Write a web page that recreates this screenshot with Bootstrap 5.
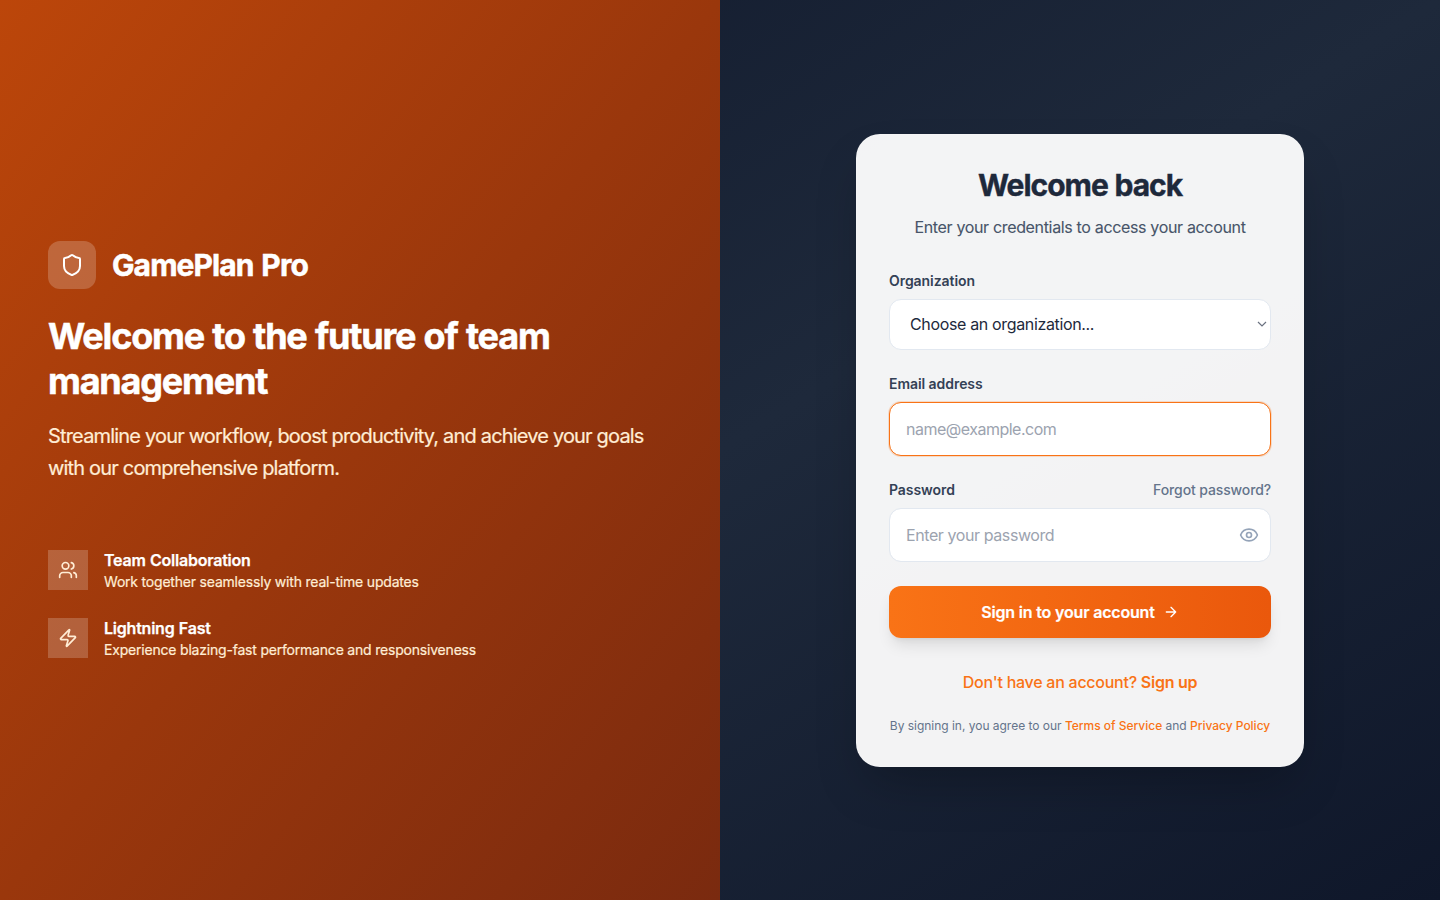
<!DOCTYPE html>
<html lang="en">
<head>
<meta charset="utf-8">
<meta name="viewport" content="width=device-width, initial-scale=1">
<title>GamePlan Pro</title>
<link href="https://cdn.jsdelivr.net/npm/bootstrap@5.3.0/dist/css/bootstrap.min.css" rel="stylesheet">
<style>
body{font-family:Inter,"Liberation Sans",sans-serif;background:linear-gradient(to bottom right,#0f172a,#1e293b,#0f172a);min-height:100vh;line-height:1.5;overflow:hidden}
svg{fill:none;stroke:currentColor;stroke-width:2;stroke-linecap:round;stroke-linejoin:round;display:block}
.hero{background:linear-gradient(to bottom right,#bc460a,#9a370c,#7a2a0f)}
.logo-box{width:48px;height:48px;border-radius:12px;background:rgba(255,255,255,.2)}
.brand{font-size:30px;line-height:36px;font-weight:700;letter-spacing:-.9px;word-spacing:1.5px;-webkit-text-stroke:.5px #fff}
.headline{font-size:36px;line-height:45px;font-weight:700;letter-spacing:-1.2px;word-spacing:1px;-webkit-text-stroke:.5px #fff;padding-top:1px}
.tagline{font-size:20px;line-height:32px;color:#ffedd5;letter-spacing:-.82px;-webkit-text-stroke:.2px #ffedd5}
.features{margin-top:64px}
.feat-box{width:40px;height:40px;background:rgba(255,255,255,.2);color:#ffedd5}
.feat-title{font-size:16px;line-height:24px;font-weight:600;letter-spacing:-.22px;word-spacing:.5px;-webkit-text-stroke:.25px #fff}
.feat-sub{font-size:14px;line-height:20px;color:#ffedd5;letter-spacing:-.2px;-webkit-text-stroke:.2px #ffedd5}
.login-card{width:448px;padding:32px;border:1px solid rgba(255,255,255,.2);border-radius:24px;background:rgba(255,255,255,.95);box-shadow:0 25px 50px -12px rgba(0,0,0,.25)}
.title{font-size:30px;line-height:36px;font-weight:700;letter-spacing:-1px;word-spacing:.5px;color:#1e293b;-webkit-text-stroke:.4px #1e293b;margin-bottom:12px}
.sub{font-size:16px;line-height:24px;color:#475569;letter-spacing:-.34px;-webkit-text-stroke:.1px #475569}
.org{margin-top:32px}
.lbl{font-size:14px;line-height:20px;font-weight:600;color:#334155;letter-spacing:-.06px}
.forgot{color:#64748b;letter-spacing:-.12px}
.fld,.fld:focus{font-size:16px;border:1px solid #e2e8f0;border-radius:12px;padding:0 16px;height:54px;color:#1e293b;background-color:#fff;box-shadow:none;letter-spacing:-.41px}
#email{letter-spacing:-.5px}
.fld::placeholder{color:#9ca3af}
.pick,.pick:focus{height:51px;padding-left:20px;letter-spacing:-.35px;background-image:url("data:image/svg+xml,%3csvg xmlns='http://www.w3.org/2000/svg' viewBox='0 0 12 12'%3e%3cpath fill='none' stroke='%236b7280' stroke-width='1.2' d='m2 4 4 4 4-4'/%3e%3c/svg%3e");background-position:right 2px center;background-size:12px}
.fld.active{border-color:#f97316;box-shadow:0 0 0 1px rgba(249,115,22,.2)}
.eye{right:12px;top:17px;color:#94a3b8}
.go{height:52px;border-radius:12px;background:linear-gradient(to right,#f97316,#ea580c);font-size:16px;font-weight:600;letter-spacing:-.18px;-webkit-text-stroke:.2px #fff;box-shadow:0 10px 15px -3px rgba(0,0,0,.1),0 4px 6px -4px rgba(0,0,0,.1)}
.signup{font-size:16px;line-height:24px;font-weight:500;color:#f97316;letter-spacing:-.26px;margin-top:32px}
.terms{font-size:12px;line-height:16px;color:#64748b;white-space:nowrap;letter-spacing:-.02px;margin-top:24px}
.terms a{color:#f97316}
</style>
</head>
<body>
<div class="d-flex vh-100">
<section class="hero w-50 d-flex flex-column justify-content-center px-5 text-white">
  <div class="d-flex align-items-center gap-3 mb-4">
    <div class="logo-box d-flex align-items-center justify-content-center"><svg width="24" height="24" viewBox="0 0 24 24"><path d="M20 13c0 5-3.500 7.500-7.660 8.950a1 1 0 0 1-.67-.01C7.500 20.500 4 18 4 13V6a1 1 0 0 1 1-1c2 0 4.500-1.200 6.240-2.720a1.170 1.170 0 0 1 1.520 0C14.510 3.810 17 5 19 5a1 1 0 0 1 1 1z"/></svg></div>
    <div class="brand">GamePlan Pro</div>
  </div>
  <h1 class="headline mb-3">Welcome to the future of team<br>management</h1>
  <p class="tagline mb-0">Streamline your workflow, boost productivity, and achieve your goals<br>with our comprehensive platform.</p>
  <div class="features d-flex flex-column gap-4">
    <div class="d-flex align-items-center gap-3">
      <div class="feat-box d-flex align-items-center justify-content-center"><svg width="20" height="20" viewBox="0 0 24 24"><path d="M16 21v-2a4 4 0 0 0-4-4H6a4 4 0 0 0-4 4v2"/><circle cx="9" cy="7" r="4"/><path d="M22 21v-2a4 4 0 0 0-3-3.870M16 3.130a4 4 0 0 1 0 7.750"/></svg></div>
      <div><div class="feat-title">Team Collaboration</div><div class="feat-sub">Work together seamlessly with real-time updates</div></div>
    </div>
    <div class="d-flex align-items-center gap-3">
      <div class="feat-box d-flex align-items-center justify-content-center"><svg width="20" height="20" viewBox="0 0 24 24"><path d="M4 14a1 1 0 0 1-.78-1.630l9.900-10.200a.5.5 0 0 1 .86.460l-1.920 6.020A1 1 0 0 0 13 10h7a1 1 0 0 1 .78 1.630l-9.900 10.200a.5.5 0 0 1-.86-.46l1.920-6.020A1 1 0 0 0 11 14z"/></svg></div>
      <div><div class="feat-title">Lightning Fast</div><div class="feat-sub">Experience blazing-fast performance and responsiveness</div></div>
    </div>
  </div>
</section>
<main class="w-50 d-flex align-items-center justify-content-center">
  <form class="login-card">
    <h2 class="title text-center">Welcome back</h2>
    <p class="sub text-center mb-0">Enter your credentials to access your account</p>
    <div class="org">
      <label class="lbl d-block mb-2" for="org">Organization</label>
      <select id="org" class="form-select fld pick"><option>Choose an organization...</option></select>
    </div>
    <div class="mt-4">
      <label class="lbl d-block mb-2" for="email">Email address</label>
      <input id="email" type="email" class="form-control fld active" placeholder="name@example.com">
    </div>
    <div class="mt-4">
      <div class="d-flex justify-content-between mb-2"><label class="lbl" for="pw">Password</label><a class="lbl forgot fw-medium text-decoration-none">Forgot password?</a></div>
      <div class="position-relative">
        <input id="pw" type="password" class="form-control fld" placeholder="Enter your password">
        <svg class="eye position-absolute" width="20" height="20" viewBox="0 0 24 24"><path d="M2.062 12.348a1 1 0 0 1 0-.696 10.750 10.750 0 0 1 19.876 0 1 1 0 0 1 0 .696 10.750 10.750 0 0 1-19.876 0"/><circle cx="12" cy="12" r="3"/></svg>
      </div>
    </div>
    <button type="button" class="go btn w-100 mt-4 border-0 text-white d-flex align-items-center justify-content-center gap-2 p-0">Sign in to your account<svg width="16" height="16" viewBox="0 0 24 24"><path d="M5 12h14M12 5l7 7-7 7"/></svg></button>
    <p class="signup text-center mb-0">Don't have an account? <span class="fw-semibold">Sign up</span></p>
    <p class="terms text-center mb-0">By signing in, you agree to our <a class="fw-medium text-decoration-none">Terms of Service</a> and <a class="fw-medium text-decoration-none">Privacy Policy</a></p>
  </form>
</main>
</div>
<script src="https://cdn.jsdelivr.net/npm/bootstrap@5.3.0/dist/js/bootstrap.bundle.min.js"></script>
</body>
</html>
